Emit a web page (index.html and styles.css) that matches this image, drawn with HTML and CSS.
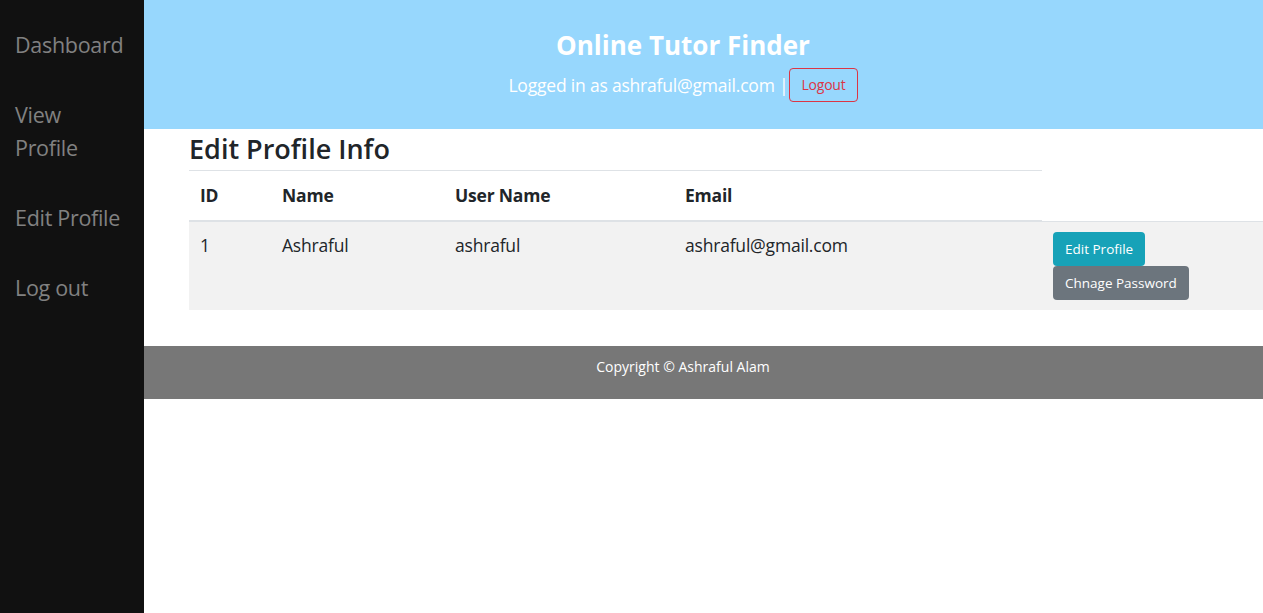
FILE: index.html
```html
<!DOCTYPE html>
<html lang="en">
<head>
<meta charset="utf-8">
<title>Edit Profile Info</title>
<link rel="stylesheet" href="styles.css">
</head>
<body>
<nav class="sidebar">
  <a class="side-link" href="#">Dashboard</a>
  <a class="side-link" href="#">View Profile</a>
  <a class="side-link" href="#">Edit Profile</a>
  <a class="side-link" href="#">Log out</a>
</nav>
<div class="main">
  <header class="top">
    <h1 class="site-title">Online Tutor Finder</h1>
    <div class="login-line">
      <span>Logged in as ashraful@gmail.com |</span>
      <a class="btn-logout" href="#">Logout</a>
    </div>
  </header>
  <section class="content">
    <h2 class="page-title">Edit Profile Info</h2>
    <table class="info-table">
      <colgroup>
        <col class="c-id">
        <col class="c-name">
        <col class="c-user">
        <col class="c-email">
        <col class="c-act">
      </colgroup>
      <thead>
        <tr><th>ID</th><th>Name</th><th>User Name</th><th>Email</th></tr>
      </thead>
      <tbody>
        <tr class="striped">
          <td>1</td>
          <td>Ashraful</td>
          <td>ashraful</td>
          <td>ashraful@gmail.com</td>
          <td>
            <div class="actions">
              <a class="btn btn-info" href="#">Edit Profile</a>
              <a class="btn btn-secondary" href="#">Chnage Password</a>
            </div>
          </td>
        </tr>
      </tbody>
    </table>
  </section>
  <footer class="foot">Copyright © Ashraful Alam</footer>
</div>
</body>
</html>
```
FILE: styles.css
```css
* { box-sizing: border-box; }
html, body { margin: 0; height: 100%; }
body {
  display: flex;
  font-family: "Open Sans", "Noto Sans", sans-serif;
  color: #212529;
  background: #fff;
}
.sidebar {
  width: 144px;
  flex: 0 0 144px;
  background: #111111;
  min-height: 100vh;
  padding-top: 10px;
  display: flex;
  flex-direction: column;
}
.side-link {
  display: block;
  color: #818181;
  text-decoration: none;
  font-size: 21.5px;
  line-height: 33px;
  padding: 18px 20px 19px 15px;
  letter-spacing: -0.3px;
}
.main {
  flex: 1;
  min-width: 0;
}
.top {
  background: #97d7fd;
  height: 129px;
  padding: 27px 41px 0 0;
  text-align: center;
  color: #fff;
}
.site-title {
  margin: 0;
  font-size: 26px;
  font-weight: 700;
  line-height: 36px;
}
.login-line {
  margin-top: 5px;
  display: flex;
  justify-content: center;
  align-items: center;
  gap: 1px;
  font-size: 17.5px;
  letter-spacing: -0.2px;
}
.btn-logout {
  display: inline-block;
  border: 1px solid #dc3545;
  border-radius: 4px;
  color: #dc3545;
  font-size: 14px;
  line-height: 20px;
  padding: 6px 11px;
  text-decoration: none;
}
.content {
  padding-left: 45px;
}
.page-title {
  margin: 3px 0 4px;
  font-size: 27px;
  font-weight: 600;
  line-height: 34px;
}
.info-table {
  width: 100%;
  border-collapse: collapse;
  table-layout: fixed;
  font-size: 17.5px;
  letter-spacing: -0.2px;
}
.c-id { width: 82px; }
.c-name { width: 173px; }
.c-user { width: 230px; }
.c-email { width: 368px; }
.info-table th,
.info-table td {
  text-align: left;
  vertical-align: top;
  padding: 10px 11px;
  line-height: 27px;
  border-top: 1px solid #dee2e6;
}
.info-table th {
  font-weight: 700;
  padding: 11px 11px;
  border-bottom: 2px solid #dee2e6;
}
.striped td { background: #f2f2f2; }
.actions {
  display: flex;
  flex-direction: column;
  align-items: flex-start;
}
.btn {
  display: inline-block;
  color: #fff;
  font-size: 13.5px;
  line-height: 20px;
  padding: 7px 12px;
  border-radius: 4px;
  text-decoration: none;
  letter-spacing: 0;
}
.btn-info { background: #17a2b8; }
.btn-secondary { background: #6c757d; }
.foot {
  margin-top: 36px;
  background: #777777;
  color: #fff;
  text-align: center;
  font-size: 14px;
  line-height: 21px;
  padding: 10px 41px 22px 0;
}
```
